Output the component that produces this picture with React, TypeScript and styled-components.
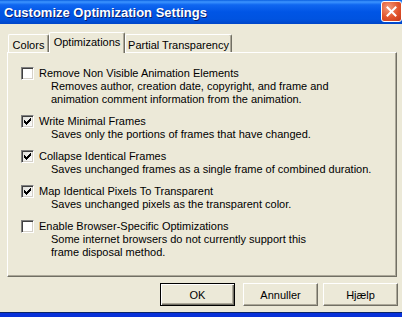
import React, { useState } from 'react';
import styled, { createGlobalStyle } from 'styled-components';

const GlobalStyle = createGlobalStyle`
	html, body {
		margin: 0;
		padding: 0;
		background: #ece9d8;
	}
	body {
		font-family: Tahoma, 'Liberation Sans', Arial, sans-serif;
		font-size: 11px;
		color: #000;
	}
`;

const Window = styled.div`
	width: 402px;
	height: 317px;
	box-sizing: border-box;
	display: flex;
	flex-direction: column;
	background: #ece9d8;
	border-bottom: 4px solid #0831d9;
	box-shadow: inset 0 -1px 0 #0a246a;
`;

const TitleBar = styled.div`
	height: 24px;
	flex: none;
	display: flex;
	align-items: center;
	justify-content: space-between;
	padding-left: 4px;
	background: linear-gradient(
		to bottom,
		#0a5fe0 0%,
		#3d95ff 8%,
		#1067f0 20%,
		#0055e5 50%,
		#0053e0 80%,
		#0046c8 100%
	);
`;

const Title = styled.span`
	font-family: 'Liberation Sans', Arial, sans-serif;
	font-weight: bold;
	font-size: 13px;
	color: #fff;
	text-shadow: 1px 1px 0 #0a1e6e;
`;

const CloseButton = styled.button`
	width: 21px;
	height: 21px;
	margin-top: -2px;
	padding: 0;
	border: 1px solid #fff;
	border-radius: 3px;
	background: radial-gradient(circle at 35% 30%, #f19a7c 0%, #e2542c 55%, #c4381a 100%);
	display: flex;
	align-items: center;
	justify-content: center;
`;

const Body = styled.div`
	flex: 1;
	display: flex;
	flex-direction: column;
	padding: 8px 5px 0 7px;
`;

const TabStrip = styled.div`
	display: flex;
	align-items: flex-end;
	height: 20px;
	padding-left: 1px;
	position: relative;
	z-index: 1;
`;

const Tab = styled.div<{ $active?: boolean; $w: number }>`
	box-sizing: border-box;
	width: ${(p) => p.$w}px;
	display: flex;
	align-items: center;
	justify-content: center;
	height: ${(p) => (p.$active ? '21px' : '18px')};
	margin-bottom: ${(p) => (p.$active ? '-1px' : '0')};
	padding: ${(p) => (p.$active ? '0 0 2px' : '2px 0 0')};
	background: #ece9d8;
	border-top: 1px solid #fff;
	border-left: 1px solid #fff;
	border-right: 1px solid #716f64;
	box-shadow: inset -1px 0 0 #aca899;
	border-radius: 2px 2px 0 0;
	position: relative;
	z-index: ${(p) => (p.$active ? 2 : 1)};
	white-space: nowrap;
`;

const Panel = styled.div`
	box-sizing: border-box;
	width: 390px;
	height: 225px;
	border-top: 1px solid #fff;
	border-left: 1px solid #fff;
	border-right: 1px solid #716f64;
	border-bottom: 1px solid #716f64;
	box-shadow: inset -1px -1px 0 #aca899;
	padding: 14px 0 0 13px;
	display: flex;
	flex-direction: column;
	gap: 9px;
`;

const Option = styled.div`
	display: flex;
	align-items: flex-start;
	gap: 5px;
`;

const Box = styled.div<{ $checked?: boolean }>`
	box-sizing: border-box;
	width: 13px;
	height: 13px;
	flex: none;
	border: 1px solid;
	border-color: #808080 #fff #fff #808080;
	box-shadow: inset 1px 1px 0 #404040, inset -1px -1px 0 #d4d0c8;
	background: ${(p) => (p.$checked ? 'linear-gradient(135deg, #dcdcd6, #fff)' : '#fff')};
	display: flex;
	align-items: center;
	justify-content: center;
`;

const Texts = styled.div`
	display: flex;
	flex-direction: column;
	line-height: 13px;
`;

const Desc = styled.div`
	padding-left: 12px;
`;

const ButtonRow = styled.div`
	display: flex;
	justify-content: flex-end;
	gap: 5px;
	margin-top: 6px;
	margin-right: -1px;
`;

const Button = styled.button<{ $default?: boolean }>`
	box-sizing: border-box;
	width: 75px;
	height: 23px;
	margin-right: ${(p) => (p.$default ? '3px' : '0')};
	font-family: inherit;
	font-size: 11px;
	color: #000;
	background: #ece9d8;
	padding: 0;
	border: 1px solid;
	border-color: ${(p) => (p.$default ? '#000' : '#fff #716f64 #716f64 #fff')};
	box-shadow: ${(p) =>
		p.$default
			? 'inset 1px 1px 0 #fff, inset -1px -1px 0 #716f64, inset -2px -2px 0 #aca899'
			: 'inset -1px -1px 0 #aca899'};
`;

const options = [
	{ label: 'Remove Non Visible Animation Elements', desc: ['Removes author, creation date, copyright, and frame and', 'animation comment information from the animation.'], checked: false },
	{ label: 'Write Minimal Frames', desc: ['Saves only the portions of frames that have changed.'], checked: true },
	{ label: 'Collapse Identical Frames', desc: ['Saves unchanged frames as a single frame of combined duration.'], checked: true },
	{ label: 'Map Identical Pixels To Transparent', desc: ['Saves unchanged pixels as the transparent color.'], checked: true },
	{ label: 'Enable Browser-Specific Optimizations', desc: ['Some internet browsers do not currently support this', 'frame disposal method.'], checked: false },
];

const tabs = [
	{ name: 'Colors', w: 41 },
	{ name: 'Optimizations', w: 76, active: true },
	{ name: 'Partial Transparency', w: 107 },
];

const Check = () => (
	<svg width="7" height="7" viewBox="0 0 7 7">
		<path d="M0 2h1v1h1v1h1v-1h1v-1h1v-1h1v-1h1v3h-1v1h-1v1h-1v1h-1v1h-1v-1h-1v-1h-1z" fill="#000" />
	</svg>
);

export default function App() {
	const [checks, setChecks] = useState(options.map((o) => o.checked));

	const toggle = (i: number) => setChecks((c) => c.map((v, j) => (j === i ? !v : v)));

	return (
		<>
			<GlobalStyle />
			<Window>
				<TitleBar>
					<Title>Customize Optimization Settings</Title>
					<CloseButton>
						<svg width="11" height="11" viewBox="0 0 11 11">
							<path d="M1.5 1.5l8 8M9.5 1.5l-8 8" stroke="#fff" strokeWidth="2" strokeLinecap="square" />
						</svg>
					</CloseButton>
				</TitleBar>
				<Body>
					<TabStrip>
						{tabs.map((t) => (
							<Tab key={t.name} $w={t.w} $active={t.active}>
								{t.name}
							</Tab>
						))}
					</TabStrip>
					<Panel>
						{options.map((o, i) => (
							<Option key={o.label} onClick={() => toggle(i)}>
								<Box $checked={checks[i]}>{checks[i] && <Check />}</Box>
								<Texts>
									<div>{o.label}</div>
									{o.desc.map((d) => (
										<Desc key={d}>{d}</Desc>
									))}
								</Texts>
							</Option>
						))}
					</Panel>
					<ButtonRow>
						<Button $default>OK</Button>
						<Button>Annuller</Button>
						<Button>Hjælp</Button>
					</ButtonRow>
				</Body>
			</Window>
		</>
	);
}
